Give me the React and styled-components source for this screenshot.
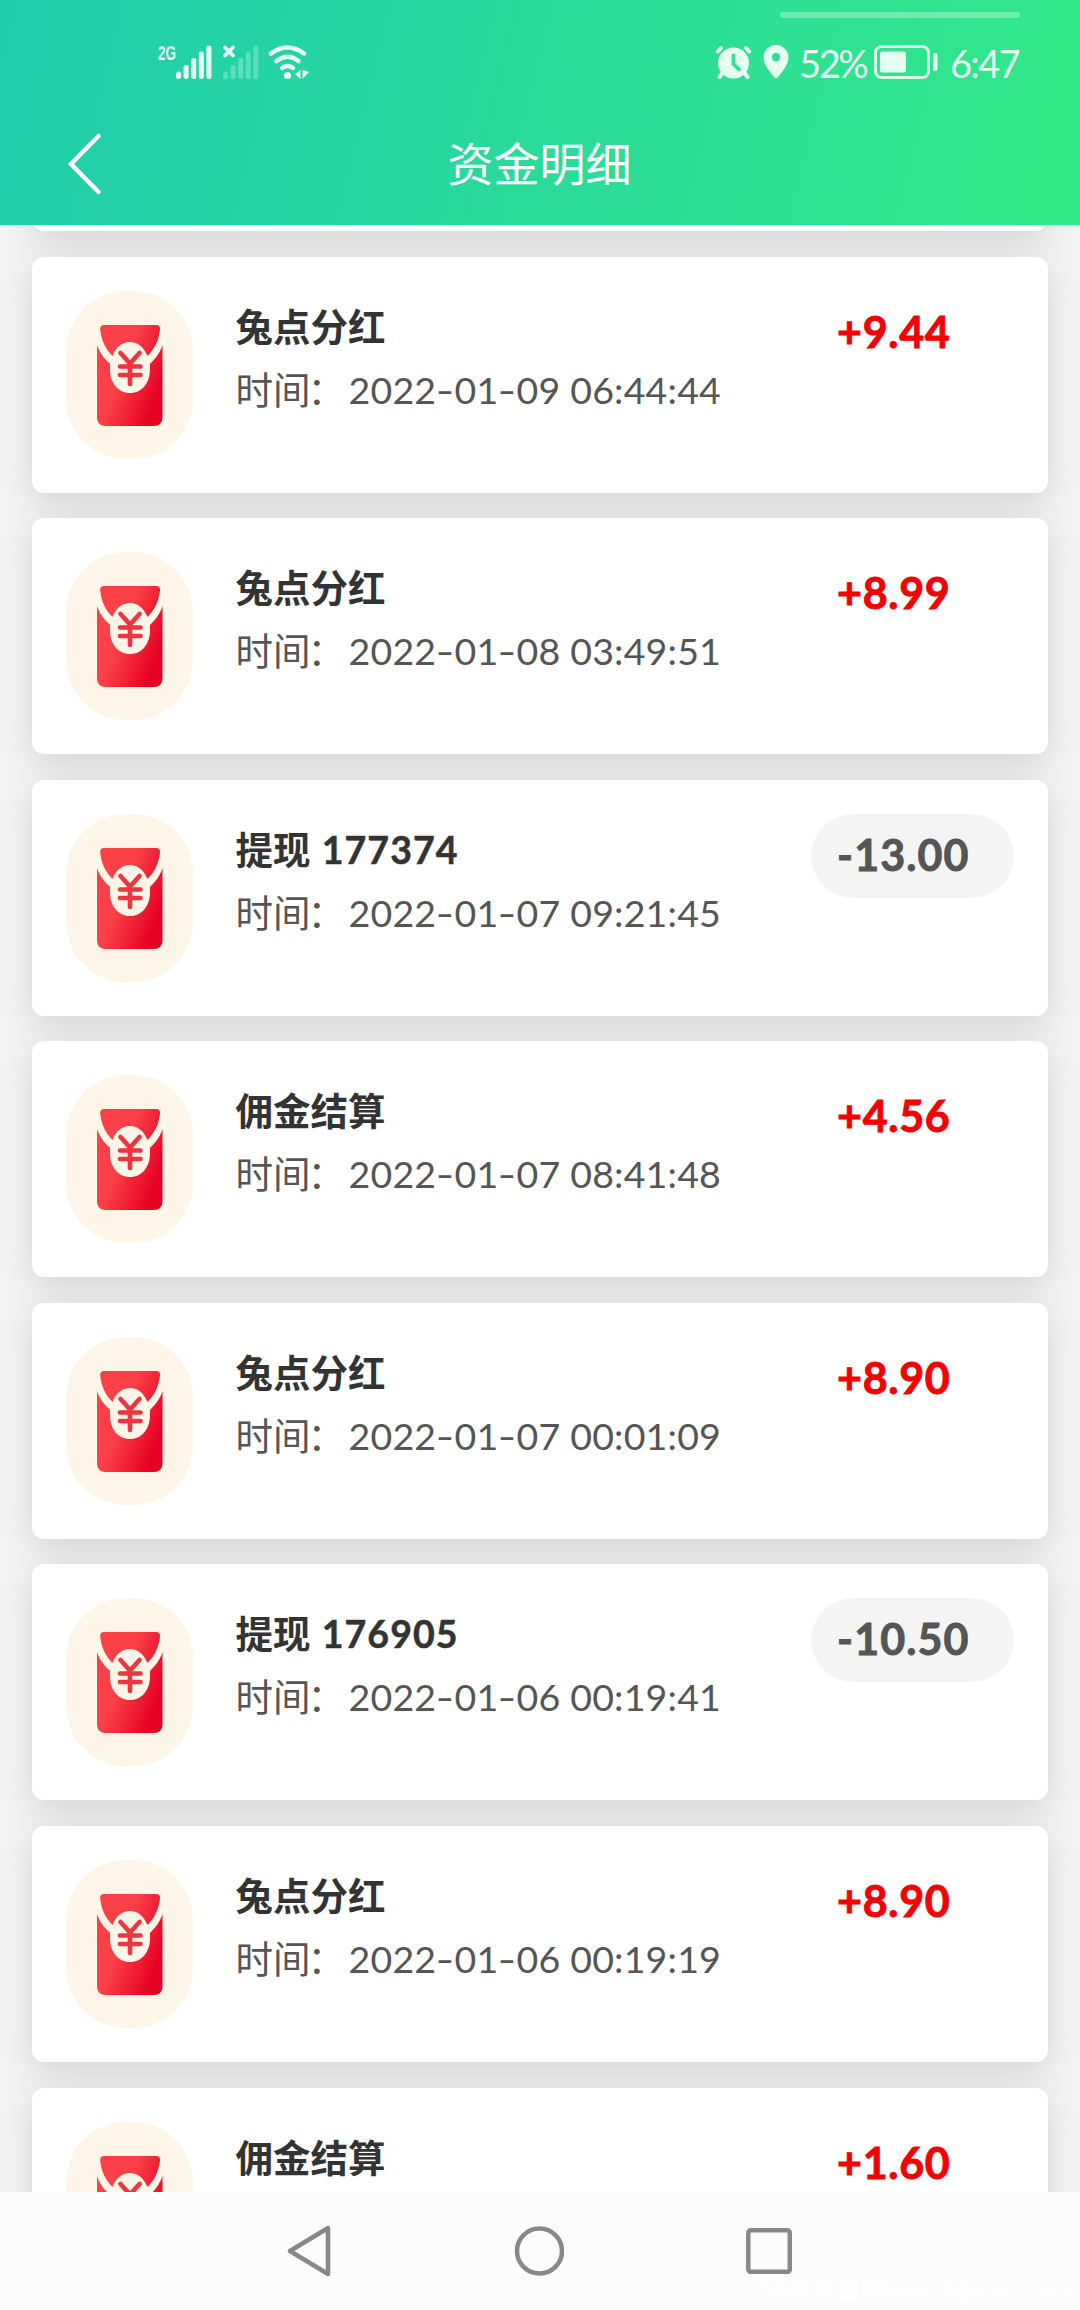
import React from "react";
import styled, { createGlobalStyle } from "styled-components";

const Global = createGlobalStyle`
  html, body { margin: 0; padding: 0; }
  body { background: #f4f4f4; font-family: Lato, "Noto Sans CJK SC", sans-serif; }
  * { box-sizing: border-box; }
`;

const Screen = styled.div`
  width: 1080px;
  height: 2310px;
  display: flex;
  flex-direction: column;
  overflow: hidden;
  background: #f4f4f4;
`;

const Header = styled.header`
  height: 225px;
  flex: none;
  position: relative;
  display: flex;
  flex-direction: column;
  background: linear-gradient(104deg, #20ccae 0%, #33e987 100%);
`;

const StatusBar = styled.div`
  height: 100px;
  padding: 24px 61px 0 158px;
  display: flex;
  justify-content: space-between;
  align-items: center;
  color: #e6fff3;
`;

const StatusGroup = styled.div`
  display: flex;
  align-items: center;
`;

const StatusText = styled.span`
  width: ${(p) => p.$width}px;
  font-size: 38px;
  line-height: 40px;
  letter-spacing: ${(p) => p.$tracking}px;
  padding-top: 2px;
  white-space: nowrap;
`;

const Gap = styled.span`
  width: ${(p) => p.$size}px;
`;

const Scroller = styled.div`
  position: absolute;
  left: 780px;
  top: 12px;
  width: 240px;
  height: 6px;
  border-radius: 3px;
  background: rgba(255, 255, 255, 0.3);
`;

const TitleBar = styled.div`
  flex: 1;
  padding-top: 3px;
  display: grid;
  grid-template-columns: 140px 1fr 140px;
  align-items: center;
`;

const BackButton = styled.button`
  border: 0;
  padding: 0 0 0 67px;
  background: none;
  display: flex;
`;

const Title = styled.h1`
  margin: 0;
  padding-right: 1px;
  text-align: center;
  font-size: 46px;
  line-height: 60px;
  font-weight: 400;
  color: #fff;
`;

const List = styled.main`
  flex: 1;
  min-height: 0;
  overflow: hidden;
  display: flex;
  flex-direction: column;
  gap: 25.57px;
  padding: 0 32px;
`;

const Card = styled.article`
  flex: none;
  height: 236px;
  margin-top: ${(p) => p.$offset || "0"};
  padding: 34px;
  display: flex;
  align-items: flex-start;
  background: #fff;
  border-radius: 12px;
  box-shadow: 0 9px 36px rgba(0, 0, 0, 0.14);
`;

const IconBadge = styled.div`
  width: 127px;
  height: 168px;
  padding-top: 2px;
  border-radius: 60px;
  background: #fdf5e7;
  display: flex;
  align-items: center;
  justify-content: center;
`;

const Info = styled.div`
  flex: 1;
  margin-left: 42.5px;
  padding-top: 8px;
`;

const Name = styled.div`
  font-size: 37.5px;
  line-height: 56px;
  font-weight: 700;
  color: #333;
  white-space: nowrap;
`;

const OrderNo = styled.span`
  margin-left: 2px;
  letter-spacing: 1.1px;
  -webkit-text-stroke: 0.5px currentColor;
`;

const Time = styled.div`
  margin-top: 7px;
  font-size: 37.5px;
  line-height: 56px;
  color: #555;
  white-space: nowrap;
`;

const Colon = styled.span`
  margin: 0 3.500px 0 -3px;
`;

const Stamp = styled.span`
  letter-spacing: 0.2px;
`;

const Dash = styled.span`
  display: inline-block;
  margin: 0 2px;
  transform: scaleX(1.35);
`;

const Amount = styled.div`
  width: 203px;
  height: 84px;
  padding-left: 26px;
  border-radius: 42px;
  font-size: 43px;
  line-height: 82px;
  font-weight: 700;
  letter-spacing: ${(p) => (p.$out ? 1.1 : 0.7)}px;
  -webkit-text-stroke: 0.9px currentColor;
  color: ${(p) => (p.$out ? "#555" : "#f40000")};
  background: ${(p) => (p.$out ? "#f4f4f4" : "transparent")};
`;

const NavBar = styled.nav`
  flex: none;
  height: 118px;
  position: relative;
  background: #fcfcfc;
  display: flex;
  justify-content: space-between;
  align-items: center;
  padding: 0 288px 0 287px;
`;

const Watermark = styled.span`
  position: absolute;
  left: 760px;
  bottom: 2px;
  font-family: "Liberation Mono", "Noto Sans CJK SC", monospace;
  font-size: 24px;
  line-height: 30px;
  color: #fff;
  white-space: nowrap;
`;

function Signal({ dim }) {
  return (
    <svg width="36" height="35" viewBox="0 0 36 35" fill="#e6fff3">
      <g fillOpacity={dim ? 0.28 : 1}>
        <rect x="0" y="26.500" width="5" height="7.500" rx="2.500" />
        <rect x="7.600" y="20" width="5" height="14" rx="2.200" />
        <rect x="15.200" y="13" width="5" height="21" rx="2.200" />
        <rect x="22.800" y="6.500" width="5" height="27.500" rx="2.200" />
        <rect x="30.400" y="0.500" width="5" height="33.500" rx="2.200" />
      </g>
      {dim && <path d="M2 2.500 10 10.500M10 2.500 2 10.500" stroke="#e6fff3" strokeWidth="3.800" strokeLinecap="round" />}
    </svg>
  );
}

const NetLabel = styled.span`
  align-self: flex-start;
  font: 700 21px/16px "Liberation Sans", sans-serif;
  width: 18px;
  transform: scaleX(0.64);
  transform-origin: left top;
`;

function Wifi() {
  return (
    <svg width="42" height="35" viewBox="0 0 42 35" fill="none" stroke="#e6fff3" strokeWidth="4.500" strokeLinecap="round">
      <path d="M3 8.500Q19.500 -3.500 36 8.500" />
      <path d="M8.500 16Q19.500 7.500 30.500 16" />
      <path d="M14 23Q19.500 19 25 23" />
      <circle cx="19.500" cy="30.500" r="3.600" fill="#e6fff3" stroke="none" />
      <path d="M32.500 25v9l-5.500-5zM34.500 34v-9l6.500 2z" fill="#e6fff3" stroke="none" />
    </svg>
  );
}

function Alarm() {
  return (
    <svg width="37" height="35" viewBox="0 0 37 35" fill="none" strokeLinecap="round">
      <circle cx="18.500" cy="18" r="15.500" fill="#e6fff3" />
      <path d="M2.800 6.500 6 3M34.200 6.500 31 3" stroke="#e6fff3" strokeWidth="4" />
      <path d="M7 28.500 4.500 32M30 28.500l2.500 3.500" stroke="#e6fff3" strokeWidth="4" />
      <path d="M18.500 10.500v8.500l5.500 5.500" stroke="#2ee28e" strokeWidth="3.800" />
    </svg>
  );
}

function Pin() {
  return (
    <svg width="26" height="34" viewBox="0 0 26 34" fill="#e6fff3">
      <path
        fillRule="evenodd"
        d="M13 0C5.800 0 .5 5.600 .5 12.500C.5 20 8 28.500 11.500 32.400Q13 34 14.500 32.400C18 28.500 25.500 20 25.500 12.500C25.500 5.600 20.200 0 13 0ZM13 8A4 4.200 0 1 1 13 16.400A4 4.200 0 0 1 13 8Z"
      />
    </svg>
  );
}

function Battery() {
  return (
    <svg width="64" height="34" viewBox="0 0 64 34" fill="none">
      <rect x="1.500" y="1.500" width="53" height="31" rx="6" stroke="#d5fce9" strokeWidth="3" />
      <rect x="6" y="6.500" width="26" height="21" rx="2" fill="#e6fff3" />
      <rect x="59" y="8" width="4.500" height="18" rx="2" fill="#e6fff3" />
    </svg>
  );
}

function RedPacket() {
  return (
    <svg width="66" height="102" viewBox="0 0 66 102">
      <defs>
        <linearGradient id="packet" gradientUnits="userSpaceOnUse" x1="12" y1="38" x2="66" y2="58">
          <stop offset="0.250" stopColor="#fb4047" />
          <stop offset="1" stopColor="#e60023" />
        </linearGradient>
      </defs>
      <path
        fill="url(#packet)"
        d="M0 20C3 28 7 34 13 38.500V44C13 58 21 68 33 68S53 58 53 44V39C58 34 63 28 65.500 20V92C65.500 98 62 101 57 101H8.500C3.500 101 0 98 0 92Z"
      />
      <path
        fill="url(#packet)"
        d="M7 0H59Q63.500 0 63 4.500C61.500 16 57.500 24 50.500 31C46.500 22 41 17 33 17S19 22 15.500 31C8.500 24 4.500 16 3.200 4.500Q2.800 0 7 0Z"
      />
      <path
        d="M23.500 28 33 38.500 42.500 28M33 38.500V59M23 41.500H43.500M23 50H43.500"
        fill="none"
        stroke="#ee3540"
        strokeWidth="4.600"
        strokeLinecap="round"
      />
    </svg>
  );
}

const records = [
  { name: "兔点分红", time: "2022-01-09 06:44:44", amount: "+9.44" },
  { name: "兔点分红", time: "2022-01-08 03:49:51", amount: "+8.99" },
  { name: "提现", no: "177374", time: "2022-01-07 09:21:45", amount: "-13.00" },
  { name: "佣金结算", time: "2022-01-07 08:41:48", amount: "+4.56" },
  { name: "兔点分红", time: "2022-01-07 00:01:09", amount: "+8.90" },
  { name: "提现", no: "176905", time: "2022-01-06 00:19:41", amount: "-10.50" },
  { name: "兔点分红", time: "2022-01-06 00:19:19", amount: "+8.90" },
  { name: "佣金结算", amount: "+1.60" },
];

function Timestamp({ value }) {
  return (
    <Stamp>
      {value.split("-").map((part, i) => (
        <React.Fragment key={i}>
          {i > 0 && <Dash>-</Dash>}
          {part}
        </React.Fragment>
      ))}
    </Stamp>
  );
}

export default function App() {
  return (
    <Screen>
      <Global />
      <Header>
        <Scroller />
        <StatusBar>
          <StatusGroup>
            <NetLabel>2G</NetLabel>
            <Signal />
            <Gap $size={11} />
            <Signal dim />
            <Gap $size={9} />
            <Wifi />
          </StatusGroup>
          <StatusGroup>
            <Alarm />
            <Gap $size={11} />
            <Pin />
            <Gap $size={10} />
            <StatusText $width={68} $tracking={-2.4}>52%</StatusText>
            <Gap $size={7} />
            <Battery />
            <Gap $size={12} />
            <StatusText $width={69} $tracking={-1.7}>6:47</StatusText>
          </StatusGroup>
        </StatusBar>
        <TitleBar>
          <BackButton aria-label="返回">
            <svg width="36" height="62" viewBox="0 0 36 62" fill="none" stroke="#fff" strokeWidth="4.500" strokeLinecap="round">
              <path d="M31.500 3 4 31 31.500 59" />
            </svg>
          </BackButton>
          <Title>资金明细</Title>
        </TitleBar>
      </Header>
      <List>
        <Card $offset="-229.9px" />
        {records.map((r, i) => (
          <Card key={i}>
            <IconBadge>
              <RedPacket />
            </IconBadge>
            <Info>
              <Name>
                {r.name}
                {r.no && <> <OrderNo>{r.no}</OrderNo></>}
              </Name>
              {r.time && (
                <Time>
                  时间<Colon>：</Colon>
                  <Timestamp value={r.time} />
                </Time>
              )}
            </Info>
            <Amount $out={r.amount.startsWith("-")}>{r.amount}</Amount>
          </Card>
        ))}
      </List>
      <NavBar>
        <svg width="44" height="52" viewBox="0 0 44 52" fill="none" stroke="#888" strokeWidth="4.500" strokeLinejoin="round">
          <path d="M41 3V49L3 26Z" />
        </svg>
        <svg width="50" height="50" viewBox="0 0 50 50" fill="none" stroke="#888" strokeWidth="4.500">
          <circle cx="25.500" cy="25" r="22.500" />
        </svg>
        <svg width="46" height="46" viewBox="0 0 46 46" fill="none" stroke="#888" strokeWidth="4.500">
          <rect x="2.300" y="2.300" width="41.500" height="41.500" rx="2.500" />
        </svg>
        <Watermark>58好项目网www.58hxm.com</Watermark>
      </NavBar>
    </Screen>
  );
}
